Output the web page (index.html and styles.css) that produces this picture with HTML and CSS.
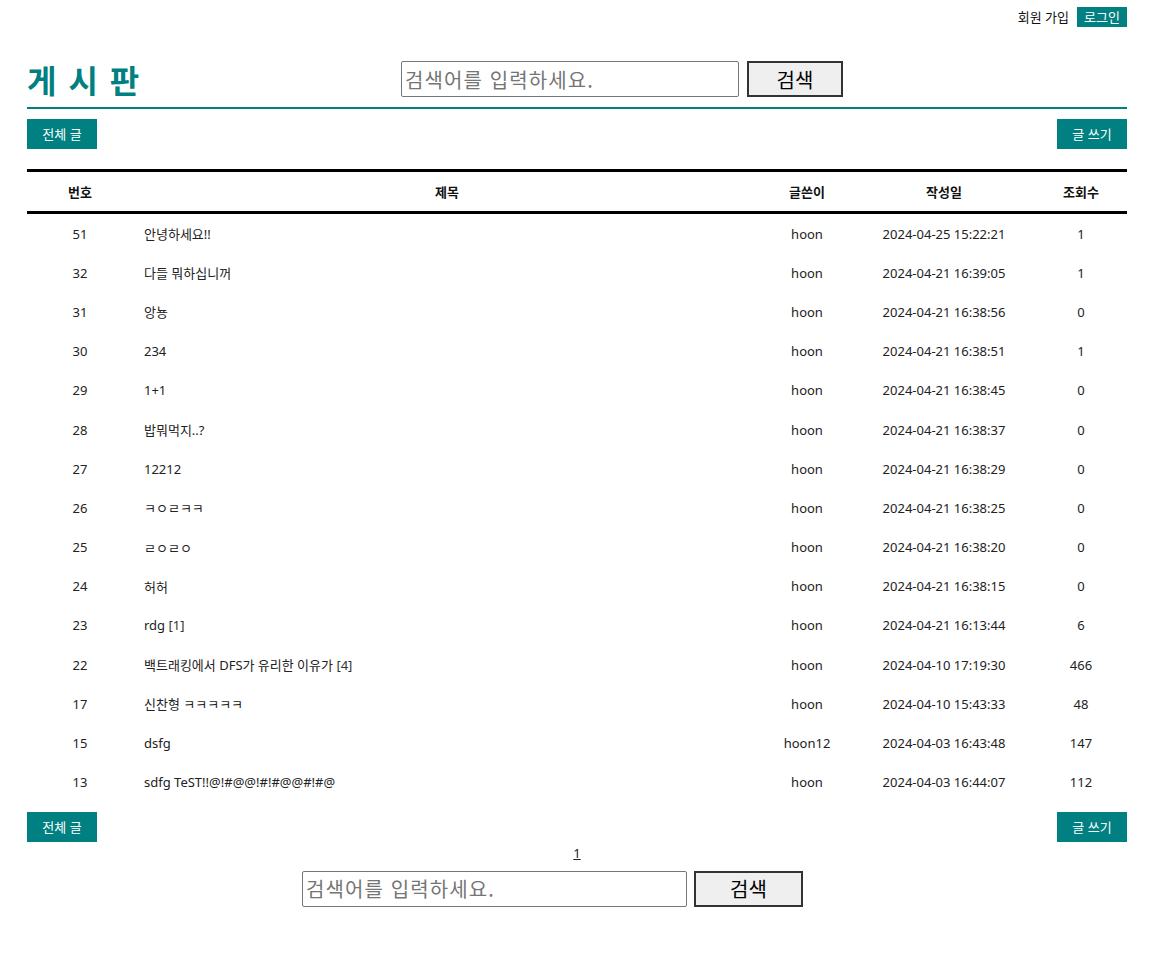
FILE: index.html
```html
<!DOCTYPE html>
<html lang="ko">
<head>
<meta charset="utf-8">
<title>게시판</title>
<link rel="stylesheet" href="styles.css">
</head>
<body>
<div class="wrap">
  <div class="topbar">
    <a class="join" href="#">회원 가입</a>
    <a class="login" href="#">로그인</a>
  </div>
  <div class="header">
    <h1 class="title">게 시 판</h1>
    <form class="search search-top">
      <input type="text" placeholder="검색어를 입력하세요.">
      <button type="button">검색</button>
    </form>
  </div>
  <div class="actions">
    <a class="btn" href="#">전체 글</a>
    <a class="btn" href="#">글 쓰기</a>
  </div>
  <table class="board">
    <thead>
      <tr><th class="c-no">번호</th><th class="c-title">제목</th><th class="c-writer">글쓴이</th><th class="c-date">작성일</th><th class="c-view">조회수</th></tr>
    </thead>
    <tbody>
      <tr><td>51</td><td class="t">안녕하세요!!</td><td>hoon</td><td>2024-04-25 15:22:21</td><td>1</td></tr>
      <tr><td>32</td><td class="t">다들 뭐하십니꺼</td><td>hoon</td><td>2024-04-21 16:39:05</td><td>1</td></tr>
      <tr><td>31</td><td class="t">앙뇽</td><td>hoon</td><td>2024-04-21 16:38:56</td><td>0</td></tr>
      <tr><td>30</td><td class="t">234</td><td>hoon</td><td>2024-04-21 16:38:51</td><td>1</td></tr>
      <tr><td>29</td><td class="t">1+1</td><td>hoon</td><td>2024-04-21 16:38:45</td><td>0</td></tr>
      <tr><td>28</td><td class="t">밥뭐먹지..?</td><td>hoon</td><td>2024-04-21 16:38:37</td><td>0</td></tr>
      <tr><td>27</td><td class="t">12212</td><td>hoon</td><td>2024-04-21 16:38:29</td><td>0</td></tr>
      <tr><td>26</td><td class="t">ㅋㅇㄹㅋㅋ</td><td>hoon</td><td>2024-04-21 16:38:25</td><td>0</td></tr>
      <tr><td>25</td><td class="t">ㄹㅇㄹㅇ</td><td>hoon</td><td>2024-04-21 16:38:20</td><td>0</td></tr>
      <tr><td>24</td><td class="t">허허</td><td>hoon</td><td>2024-04-21 16:38:15</td><td>0</td></tr>
      <tr><td>23</td><td class="t">rdg <span class="cmt">[1]</span></td><td>hoon</td><td>2024-04-21 16:13:44</td><td>6</td></tr>
      <tr><td>22</td><td class="t">백트래킹에서 DFS가 유리한 이유가 <span class="cmt">[4]</span></td><td>hoon</td><td>2024-04-10 17:19:30</td><td>466</td></tr>
      <tr><td>17</td><td class="t">신찬형 ㅋㅋㅋㅋㅋ</td><td>hoon</td><td>2024-04-10 15:43:33</td><td>48</td></tr>
      <tr><td>15</td><td class="t">dsfg</td><td>hoon12</td><td>2024-04-03 16:43:48</td><td>147</td></tr>
      <tr><td>13</td><td class="t">sdfg TeST!!@!#@@!#!#@@#!#@</td><td>hoon</td><td>2024-04-03 16:44:07</td><td>112</td></tr>
    </tbody>
  </table>
  <div class="actions actions-bottom">
    <a class="btn" href="#">전체 글</a>
    <a class="btn" href="#">글 쓰기</a>
  </div>
  <div class="paging"><a href="#">1</a></div>
  <form class="search search-bottom">
    <input type="text" placeholder="검색어를 입력하세요.">
    <button type="button">검색</button>
  </form>
</div>
</body>
</html>
```

FILE: styles.css
```css
html, body {
  margin: 0;
  padding: 0;
  background: #fff;
}
body {
  font-family: "Noto Sans", "Noto Sans CJK KR", sans-serif;
  font-size: 13px;
  color: #222;
}
.wrap {
  width: 1100px;
  margin-left: 27px;
}
.topbar {
  display: flex;
  justify-content: flex-end;
  align-items: center;
  gap: 8px;
  padding-top: 7px;
  height: 20px;
}
.topbar a {
  text-decoration: none;
  font-size: 13px;
  line-height: 20px;
}
.join {
  color: #111;
}
.login {
  background: #008080;
  color: #fff;
  width: 50px;
  text-align: center;
  height: 20px;
}
.header {
  display: flex;
  align-items: center;
  margin-top: 34px;
  height: 36px;
  padding-bottom: 10px;
  border-bottom: 2px solid #008080;
}
.title {
  margin: 0;
  width: 374px;
  font-family: "Noto Sans CJK KR", sans-serif;
  font-size: 32px;
  font-weight: bold;
  color: #008080;
  line-height: 36px;
  white-space: pre;
  word-spacing: 3px;
}
.search {
  display: flex;
  align-items: stretch;
  margin: 0;
}
.search input {
  box-sizing: border-box;
  height: 36px;
  border: 1px solid #767676;
  border-radius: 2px;
  padding: 0 3px;
  font-family: "Noto Sans CJK KR", sans-serif;
  font-size: 20px;
  letter-spacing: 1.1px;
  color: #000;
  outline: none;
}
.search input::placeholder {
  color: #757575;
}
.search button {
  box-sizing: border-box;
  height: 36px;
  border: 2px solid #333;
  background: #efefef;
  font-family: "Noto Sans CJK KR", sans-serif;
  font-size: 20px;
  color: #000;
  padding: 0;
}
.search-top {
  gap: 8px;
}
.search-top input {
  width: 338px;
}
.search-top button {
  width: 96px;
}
.actions {
  display: flex;
  justify-content: space-between;
  margin-top: 10px;
}
.btn {
  display: block;
  width: 70px;
  height: 30px;
  line-height: 30px;
  background: #008080;
  color: #fff;
  text-align: center;
  text-decoration: none;
  font-size: 13px;
}
.board {
  margin-top: 20px;
  width: 1100px;
  border-collapse: collapse;
  table-layout: fixed;
}
.board th {
  height: 39px;
  padding: 0;
  border-top: 3px solid #000;
  border-bottom: 3px solid #000;
  font-weight: bold;
  color: #111;
  font-size: 13px;
  text-align: center;
}
.board td {
  height: 39.2px;
  padding: 0;
  text-align: center;
  font-size: 13px;
  color: #222;
}
.board td.t {
  text-align: left;
  padding-left: 11px;
}
.c-no { width: 106px; }
.c-title { width: 628px; }
.c-writer { width: 92px; }
.c-date { width: 182px; }
.c-view { width: 92px; }
.cmt {
  color: #333;
}
.actions-bottom {
  margin-top: 10px;
}
.paging {
  text-align: center;
  margin-top: 1px;
  height: 20px;
  line-height: 20px;
}
.paging a {
  color: #222;
  text-decoration: underline;
}
.search-bottom {
  gap: 7px;
  margin-top: 8px;
  margin-left: 275px;
}
.search-bottom input {
  width: 385px;
}
.search-bottom button {
  width: 109px;
}
```
